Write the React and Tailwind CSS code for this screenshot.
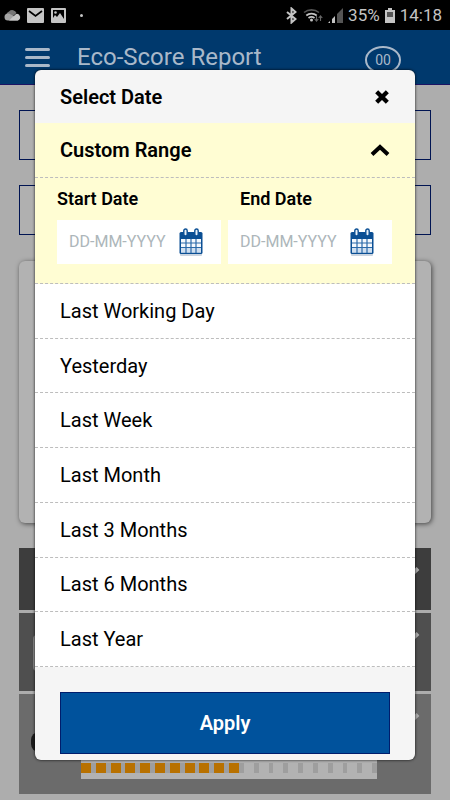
import { useState } from 'react'

const ranges = [
    'Last Working Day',
    'Yesterday',
    'Last Week',
    'Last Month',
    'Last 3 Months',
    'Last 6 Months',
    'Last Year'
]

const TOTAL_CELLS = 20
const FILLED_CELLS = 11

const CalendarIcon = () => (
    <svg width="24" height="28" viewBox="0 0 24 28" aria-hidden="true">
        <rect x="1" y="25" width="22" height="3" rx="1" fill="#c9d3df" />
        <rect x="0.5" y="4" width="23" height="22" rx="1.5" fill="#0b4f94" />
        <rect x="2" y="11" width="20" height="13.5" fill="#f4f8fc" />
        <rect x="2" y="19" width="20" height="5.5" fill="#cfdff0" />
        <path d="M7 11v14M12 11v14M17 11v14M2 15h20M2 19.500h20" stroke="#2a69a8" strokeWidth="1.2" />
        <rect x="4.8" y="1" width="3.4" height="7" rx="1.7" fill="#e8f0f8" stroke="#0b4f94" strokeWidth="1.4" />
        <rect x="15.8" y="1" width="3.4" height="7" rx="1.7" fill="#e8f0f8" stroke="#0b4f94" strokeWidth="1.4" />
    </svg>
)

const Chevron = ({ className }) => (
    <svg className={className} width="20" height="14" viewBox="0 0 20 14" fill="none" aria-hidden="true">
        <path d="M2 11.5L10 4l8 7.5" stroke="currentColor" strokeWidth="4" />
    </svg>
)

const StatusBar = () => (
    <div className="h-[30px] bg-black text-[#c4c4c4] flex items-center justify-between pl-1 pr-2">
        <div className="flex items-center gap-[6px]">
            <svg width="17" height="12" viewBox="0 0 17 12" aria-hidden="true">
                <path d="M3 9a4.5 4.5 0 0 1 2-6.500a4.500 4.500 0 0 1 7.500 1.500L8 8z" fill="#777" />
                <path d="M4 11.500a3.500 3.500 0 0 1 0-7c2 0 3 1 4.500 2L15 10l-1 1.500z" fill="#a4a4a4" />
                <path d="M5 11.500L12 5a3.300 3.300 0 0 1 1.500 6.500z" fill="#c8c8c8" />
            </svg>
            <svg width="17" height="15" viewBox="0 0 17 15" aria-hidden="true">
                <rect width="17" height="15" rx="1" fill="#c4c4c4" />
                <path d="M2 3l6.500 5L15 3" fill="none" stroke="#000" strokeWidth="1.700" />
            </svg>
            <svg className="ml-[1px]" width="15" height="15" viewBox="0 0 15 15" aria-hidden="true">
                <rect width="15" height="15" rx="1" fill="#c4c4c4" />
                <path d="M2 2h11v9l-4-6-3 4-2-2-2 3z" fill="#000" />
                <circle cx="4.500" cy="4.500" r="1.300" fill="#c4c4c4" />
            </svg>
            <span className="ml-2 size-[3px] rounded-full bg-[#c4c4c4]"></span>
        </div>
        <div className="flex items-center gap-[5px] text-[17px] leading-5">
            <svg className="mr-[1px]" width="11" height="17" viewBox="0 0 11 17" fill="none" aria-hidden="true">
                <path d="M1 5l8.500 7L5.500 15.500v-14l4 3.500L1 12" stroke="currentColor" strokeWidth="2" />
            </svg>
            <svg width="20" height="15" viewBox="0 0 20 15" fill="none" aria-hidden="true">
                <path d="M1 4.500a12 12 0 0 1 15 0" stroke="#555" strokeWidth="1.600" />
                <path d="M3.300 7.500a8 8 0 0 1 10.400 0M5.500 10a5 5 0 0 1 6 0" stroke="#c4c4c4" strokeWidth="1.700" />
                <circle cx="8.500" cy="12" r="1.500" fill="#c4c4c4" />
                <path d="M13.500 8v5m-1.800-2l1.800 2.200 1.800-2.200M17.500 13V8m-1.800 2l1.800-2.200 1.800 2.200" stroke="#666" strokeWidth="1.100" />
            </svg>
            <svg width="15" height="15" viewBox="0 0 15 15" aria-hidden="true">
                <path d="M0 15h2v-2zM4 15h3V8L4 11z" fill="#c4c4c4" />
                <path d="M9 15h6V0L9 6z" fill="#555" />
            </svg>
            <span>35%</span>
            <svg width="10" height="15" viewBox="0 0 10 15" aria-hidden="true">
                <path d="M3 0h4v2h3v13H0V2h3z" fill="#c4c4c4" />
                <rect x="2" y="4" width="6" height="5" fill="#555" />
            </svg>
            <span>14:18</span>
        </div>
    </div>
)

const DateField = ({ id, label, labelClass, value, onChange }) => (
    <div className="flex-1 min-w-0">
        <label htmlFor={id} className={`block text-lg leading-[22px] font-semibold ${labelClass}`}>
            {label}
        </label>
        <div className="mt-[10px] h-[44px] bg-white flex items-center pl-3 pr-[18px]">
            <input
                id={id}
                type="text"
                value={value}
                onChange={(e) => onChange(e.target.value)}
                placeholder="DD-MM-YYYY"
                className="flex-1 min-w-0 text-base text-gray-700 placeholder:text-[#adb6ba] outline-none"
            />
            <button type="button" aria-label={`Open ${label} calendar`} className="shrink-0">
                <CalendarIcon />
            </button>
        </div>
    </div>
)

const SelectDateDialog = () => {
    const [open, setOpen] = useState(true)
    const [startDate, setStartDate] = useState('')
    const [endDate, setEndDate] = useState('')

    return (
        <div role="dialog" aria-label="Select Date" className="absolute inset-x-[35px] top-[70px] bg-[#f5f5f5] rounded-md shadow-[0_0_3px_rgba(0,0,0,0.9)] overflow-hidden text-black">
            <div className="h-[53px] flex items-center justify-between px-[25px]">
                <h2 className="text-xl font-semibold">Select Date</h2>
                <button type="button" aria-label="Close">
                    <svg width="16" height="16" viewBox="0 0 15 15" aria-hidden="true">
                        <path d="M2.500 2.500l10 10M12.500 2.500l-10 10" stroke="currentColor" strokeWidth="4" />
                    </svg>
                </button>
            </div>

            <button
                type="button"
                aria-expanded={open}
                onClick={() => setOpen(!open)}
                className="w-full h-[55px] bg-[#fffdd3] border-b border-dashed border-[#bdbdbd] flex items-center justify-between px-[25px] text-xl font-semibold"
            >
                Custom Range
                <Chevron className={open ? '' : 'rotate-180'} />
            </button>

            {/* start / end date */}
            {open && (
                <div className="h-[106px] bg-[#fffdd3] border-b border-dashed border-[#bdbdbd] flex gap-[7px] pt-[10px] pl-[22px] pr-[23px]">
                    <DateField id="start-date" label="Start Date" labelClass="" value={startDate} onChange={setStartDate} />
                    <DateField id="end-date" label="End Date" labelClass="pl-3" value={endDate} onChange={setEndDate} />
                </div>
            )}

            <ul className="h-[383px] grid auto-rows-fr bg-white">
                {ranges.map(range => (
                    <li key={range} className="border-b border-dashed border-[#bdbdbd]">
                        <button type="button" className="w-full h-full px-[25px] text-left text-xl">
                            {range}
                        </button>
                    </li>
                ))}
            </ul>

            <div className="px-[25px] pt-[25px] pb-[6px]">
                <button type="button" className="w-full h-[62px] bg-[#00529c] border border-[#001d6c] text-white text-xl font-semibold">
                    Apply
                </button>
            </div>
        </div>
    )
}

export default function App() {
    return (
        <div className="relative min-h-screen bg-[#adadad] font-[Roboto,sans-serif]">
            <StatusBar />

            <header className="h-[55px] bg-[#00396d] border-b border-[#1c1464] text-[#a9b8c9] flex items-center pl-[25px] pr-[49px]">
                <button type="button" aria-label="Menu" className="flex flex-col gap-[5px]">
                    <span className="w-[25px] h-[3px] rounded-full bg-[#a9b8c9]"></span>
                    <span className="w-[25px] h-[3px] rounded-full bg-[#a9b8c9]"></span>
                    <span className="w-[25px] h-[3px] rounded-full bg-[#a9b8c9]"></span>
                </button>
                <h1 className="ml-[27px] text-2xl">Eco-Score Report</h1>
                <span className="ml-auto mt-[5px] w-9 h-7 rounded-[50%] border-2 border-[#a9b8c9] flex items-center justify-center text-sm">
                    00
                </span>
            </header>

            <main className="px-[19px] pt-[25px]">
                <div className="h-[50px] border border-[#001452] bg-[#b0b0b0]"></div>
                <div className="mt-[25px] h-[50px] border border-[#001452] bg-[#b0b0b0]"></div>
                <div className="mt-[26px] h-[262px] rounded-md bg-[#b2b2b2] shadow-[1px_1px_5px_rgba(0,0,0,0.6)]"></div>

                <div className="mt-[25px] flex flex-col gap-[3px] text-[#adadad]">
                    <div className="h-[62px] bg-[#3d3d3d] flex items-start justify-end pt-[18px] pr-[11px]">
                        <Chevron className="rotate-180" />
                    </div>
                    <div className="h-[78px] bg-[#4f4f4f] flex items-start justify-between pl-[14px] pt-[18px] pr-[11px]">
                        <span className="mt-1 w-8 h-9 rounded-sm bg-[#8a8a8a]"></span>
                        <Chevron className="rotate-180" />
                    </div>
                    <div className="h-[100px] bg-[#6b6b6b] flex flex-col justify-between pb-[15px]">
                        <div className="flex items-start justify-between pl-3 pt-[18px] pr-[11px]">
                            <span className="mt-5 w-4 h-5 rounded-full bg-[#1c1c1c]"></span>
                            <Chevron className="rotate-180" />
                        </div>
                        <div className="ml-[62px] mr-[54px] bg-[#b2b2b2] pt-[3px] pb-[6px] flex">
                            {Array.from({ length: TOTAL_CELLS }, (_, i) => (
                                <div key={i} className="flex-1 h-[10px] flex">
                                    <span className={`w-[10px] ${i < FILLED_CELLS ? 'bg-[#b87100]' : ''}`}></span>
                                    <span className="flex-1 bg-[#9e9e9e]"></span>
                                </div>
                            ))}
                        </div>
                    </div>
                </div>
            </main>

            <SelectDateDialog />
        </div>
    )
}
